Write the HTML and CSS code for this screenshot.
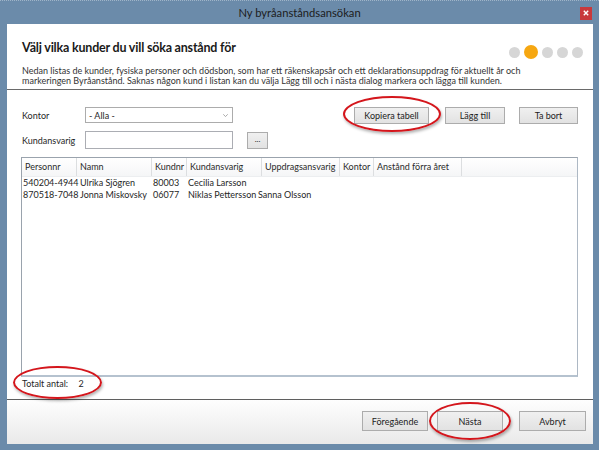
FILE: index.html
```html
<!DOCTYPE html>
<html lang="sv">
<head>
<meta charset="utf-8">
<title>Ny byråanståndsansökan</title>
<link rel="stylesheet" href="styles.css">
</head>
<body>
<div class="window">
  <div class="titlebar">
    <span class="tb-side"></span>
    <span class="title">Ny byråanståndsansökan</span>
    <span class="tb-side tb-right"><span class="close"><svg width="6" height="6" viewBox="0 0 6 6"><path d="M0.8 0.8 L5.2 5.2 M5.2 0.8 L0.8 5.2" stroke="#fff" stroke-width="1.4"/></svg></span></span>
  </div>
  <div class="client">
    <div class="header">
      <div class="head-row">
        <h1 class="heading">Välj vilka kunder du vill söka anstånd för</h1>
        <div class="steps"><i class="dot"></i><i class="dot active"></i><i class="dot"></i><i class="dot"></i><i class="dot"></i></div>
      </div>
      <p class="desc">Nedan listas de kunder, fysiska personer och dödsbon, som har ett räkenskapsår och ett deklarationsuppdrag för aktuellt år och<br>markeringen Byråanstånd. Saknas någon kund i listan kan du välja Lägg till och i nästa dialog markera och lägga till kunden.</p>
    </div>
    <div class="content">
      <div class="toolbar">
        <div class="fields">
          <div class="field-row">
            <span class="label">Kontor</span>
            <span class="select"><span>- Alla -</span><svg class="caret" width="5" height="3" viewBox="0 0 5 3"><path d="M0.3 0.3 L2.5 2.6 L4.7 0.3" fill="none" stroke="#a0a0a0" stroke-width="0.9"/></svg></span>
          </div>
          <div class="field-row">
            <span class="label">Kundansvarig</span>
            <span class="input"></span>
            <span class="btn btn-dots">...</span>
          </div>
        </div>
        <div class="actions">
          <span class="btn btn-copy">Kopiera tabell</span>
          <span class="btn btn-add">Lägg till</span>
          <span class="btn btn-del">Ta bort</span>
        </div>
      </div>
      <div class="list">
        <div class="list-head">
          <span>Personnr</span><span>Namn</span><span>Kundnr</span><span>Kundansvarig</span><span>Uppdragsansvarig</span><span>Kontor</span><span>Anstånd förra året</span><span class="fill"></span>
        </div>
        <div class="list-row">
          <span>540204-4944</span><span>Ulrika Sjögren</span><span>80003</span><span>Cecilia Larsson</span><span></span><span></span><span></span>
        </div>
        <div class="list-row">
          <span>870518-7048</span><span>Jonna Miskovsky</span><span>06077</span><span>Niklas Pettersson</span><span>Sanna Olsson</span><span></span><span></span>
        </div>
      </div>
      <div class="total">Totalt antal: <span class="total-num">2</span></div>
    </div>
    <div class="footer">
      <span class="btn btn-foot">Föregående</span>
      <span class="btn btn-foot btn-next">Nästa</span>
      <span class="btn btn-foot btn-cancel">Avbryt</span>
    </div>
  </div>
</div>
<div class="mark mark-copy"></div>
<div class="mark mark-total"></div>
<div class="mark mark-next"></div>
</body>
</html>
```

FILE: styles.css
```css
* { box-sizing: border-box; }
html, body { margin: 0; padding: 0; }
body {
  width: 599px;
  height: 450px;
  overflow: hidden;
  background: #6b8baa;
  font-family: Lato, "Liberation Sans", sans-serif;
  font-size: 9px;
  color: #262626;
  position: relative;
}
.window {
  width: 599px;
  height: 450px;
  display: flex;
  flex-direction: column;
  border-top: 1px dotted #9fb4c8;
}
.titlebar {
  height: 23px;
  display: grid;
  grid-template-columns: 1fr auto 1fr;
  align-items: center;
}
.title {
  font-size: 11.2px;
  color: #1c1c1c;
}
.tb-right { justify-self: end; padding-right: 7px; display: flex; }
.close {
  width: 12px;
  height: 13px;
  background: #c8393c;
  display: flex;
  align-items: center;
  justify-content: center;
  margin-top: 1px;
}
.client {
  flex: 1;
  margin: 0 6px 6px 7px;
  background: #fff;
  display: flex;
  flex-direction: column;
}
.header {
  padding: 16px 10px 3px 15px;
  border-bottom: 1px solid #6a6a6a;
  height: 66px;
}
.head-row {
  display: flex;
  justify-content: space-between;
  align-items: center;
  height: 16px;
}
.heading {
  margin: 0;
  font-size: 12.5px;
  letter-spacing: -0.2px;
  font-weight: bold;
  color: #1a1a1a;
  line-height: 16px;
}
.steps {
  display: flex;
  align-items: center;
  gap: 4px;
  margin-top: 8px;
}
.dot {
  display: block;
  width: 11px;
  height: 11px;
  border-radius: 50%;
  background: #d6d6d6;
}
.dot.active {
  width: 14px;
  height: 14px;
  background: #f6a711;
}
.desc {
  margin: 10px 0 0;
  line-height: 10px;
  color: #333;
}
.content {
  flex: 1;
  padding: 17px 15px 0 14px;
  display: flex;
  flex-direction: column;
}
.toolbar {
  display: flex;
  justify-content: space-between;
  align-items: flex-start;
}
.fields {
  display: flex;
  flex-direction: column;
  gap: 8px;
}
.field-row {
  display: flex;
  align-items: center;
}
.label {
  width: 64px;
  padding-left: 1px;
}
.select {
  width: 148px;
  height: 16px;
  border: 1px solid #acacac;
  display: flex;
  align-items: center;
  justify-content: space-between;
  padding: 0 4px 0 3px;
  background: #fff;
}
.input {
  width: 148px;
  height: 18px;
  border: 1px solid #abadb3;
  background: #fff;
}
.btn {
  display: flex;
  align-items: center;
  justify-content: center;
  background: linear-gradient(#f0f0f0, #e2e2e2);
  border: 1px solid #acacac;
  color: #222;
}
.btn-dots {
  width: 21px;
  height: 17px;
  margin-left: 14px;
  font-size: 8px;
  padding-bottom: 3px;
}
.actions {
  display: flex;
  height: 17px;
}
.btn-copy { width: 75px; }
.btn-add { width: 60px; margin-left: 16px; }
.btn-del { width: 59px; margin-left: 14px; }
.list {
  margin-top: 8px;
  height: 220px;
  border: 1px solid #9aa3ad;
  border-bottom: 2px solid #b5c2cf;
  border-right-color: #adb8c4;
}
.list-head {
  display: grid;
  grid-template-columns: 55px 75px 35px 75px 78px 34px 88px 1fr;
  height: 19px;
  background: linear-gradient(#ffffff, #f5f6f7);
  border-bottom: 1px solid #eceef0;
}
.list-head span {
  border-right: 1px solid #dcdee0;
  padding: 0 0 1px 3px;
  display: flex;
  align-items: center;
  white-space: nowrap;
  color: #2a2a2a;
}
.list-head span.fill { border-right: none; }
.list-row {
  display: grid;
  grid-template-columns: 57px 73px 35px 70px 78px 34px 88px;
  height: 12px;
  line-height: 12px;
}
.list-row span {
  padding-left: 1px;
  white-space: nowrap;
}
.total {
  height: 22px;
  padding: 1px 0 0 1px;
  line-height: 12px;
}
.total-num { margin-left: 8px; }
.footer {
  height: 45px;
  border-top: 1px solid #5f5f5f;
  background: linear-gradient(#fefefe, #e9e9e9);
  display: flex;
  justify-content: flex-end;
  align-items: flex-start;
  padding: 11px 7px 0 0;
}
.btn-foot { width: 66px; height: 20px; }
.btn-next { margin-left: 9px; }
.btn-cancel { width: 67px; margin-left: 16px; }
.mark {
  position: absolute;
  border: 2px solid #d4161c;
  border-radius: 50%;
  box-shadow: 1px 2px 3px rgba(0,0,0,0.3);
}
.mark-copy { left: 343px; top: 96px; width: 98px; height: 36px; }
.mark-total { left: 13px; top: 366px; width: 89px; height: 33px; }
.mark-next { left: 429px; top: 402px; width: 82px; height: 38px; }
```
